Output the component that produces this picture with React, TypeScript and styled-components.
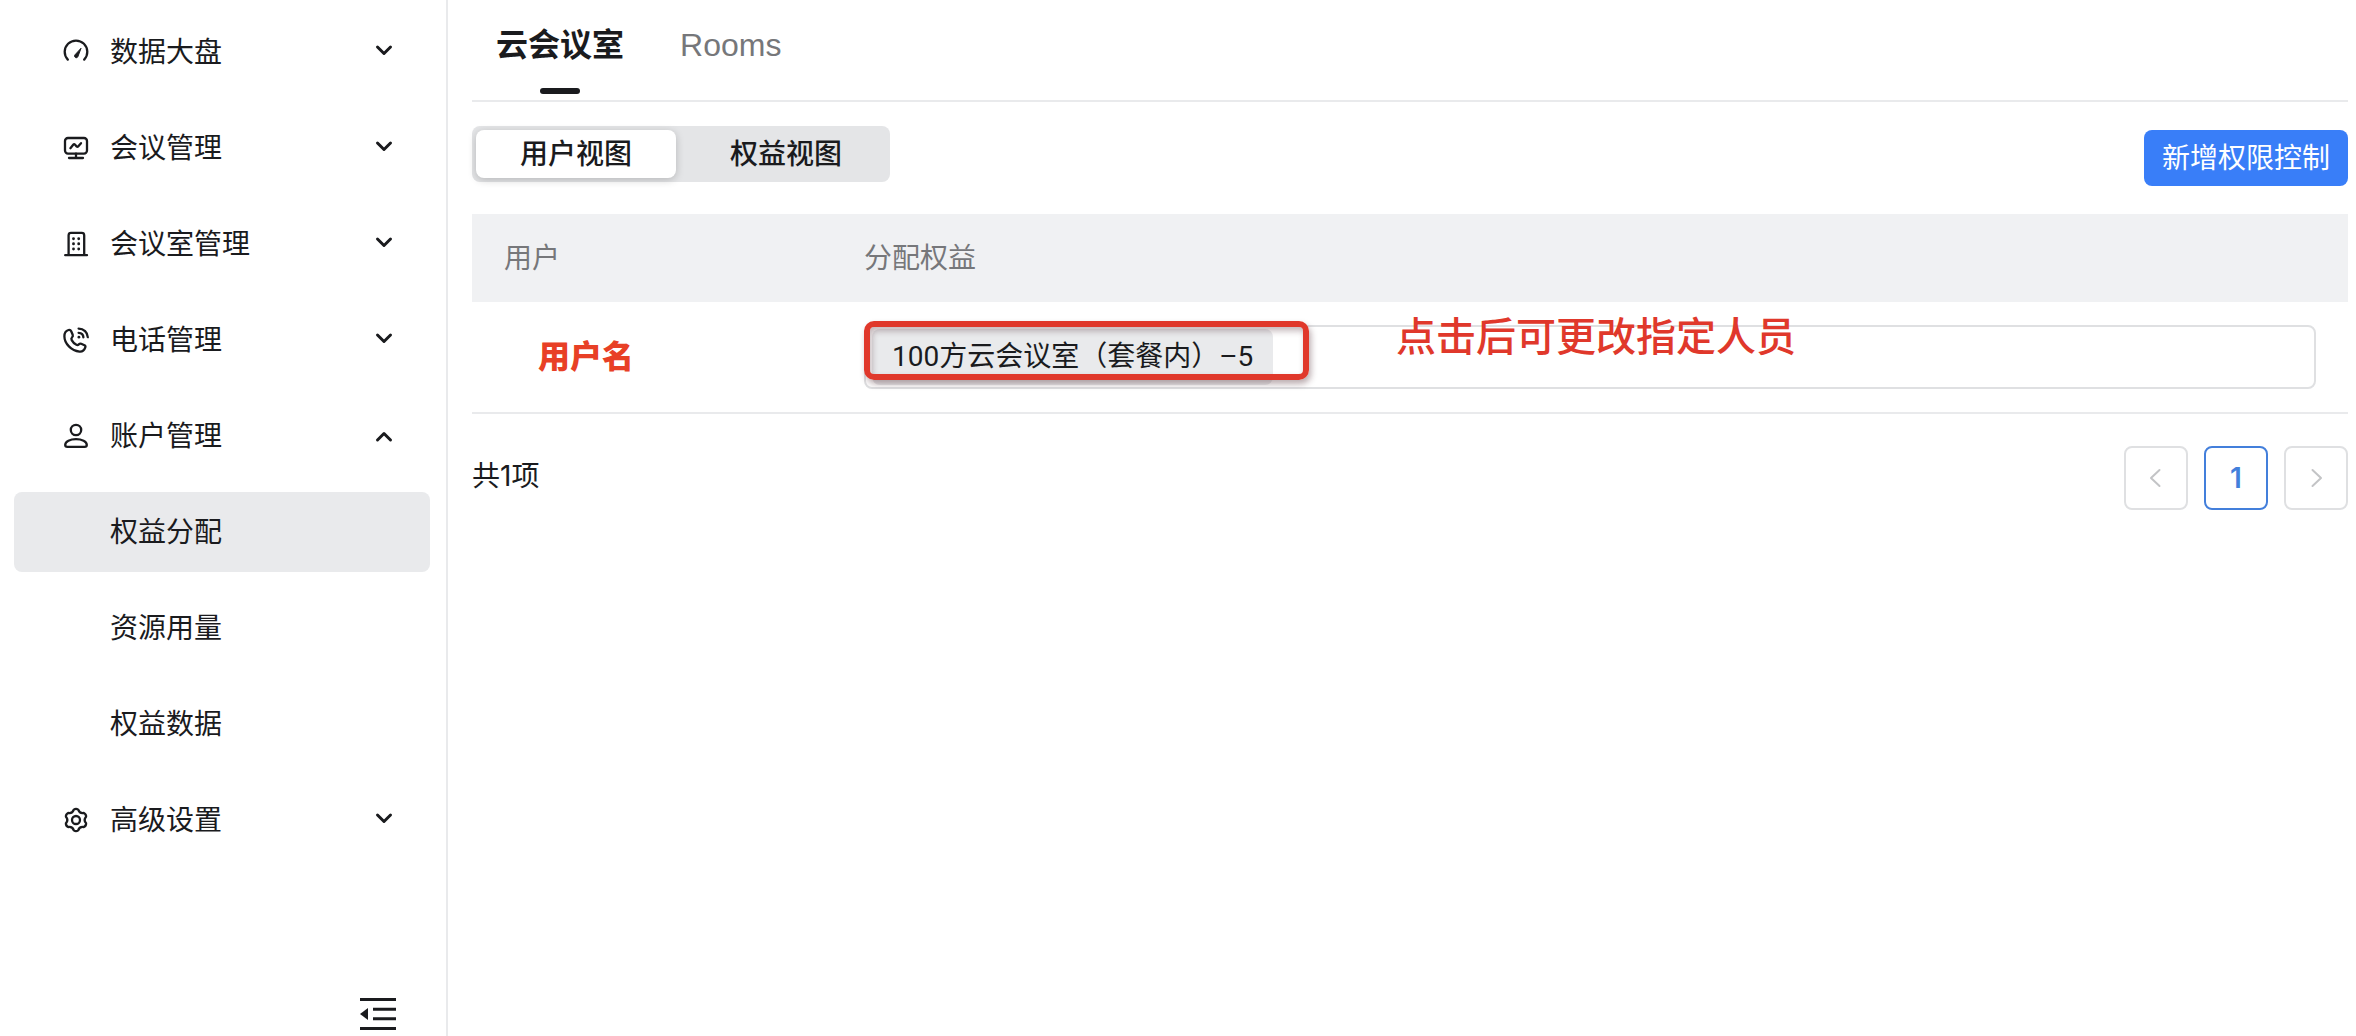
import React from 'react';
import styled, { createGlobalStyle, css } from 'styled-components';

const color = {
  text: '#1a1b1e',
  muted: '#76777a',
  line: '#e9eaec',
  field: '#dfe0e2',
  hover: '#e9eaec',
  head: '#f0f1f3',
  segment: '#e4e5e7',
  primary: '#397ef8',
  page: '#437fdb',
  mark: '#e0382b',
  disabled: '#c3c4c6',
};

const cjk = "'Noto Sans CJK SC', sans-serif";

const GlobalStyle = createGlobalStyle`
  *, *::before, *::after { box-sizing: border-box; }
  body {
    margin: 0;
    background: #fff;
    color: ${color.text};
    font-family: Inter, ${cjk};
    font-size: 28px;
    line-height: 40px;
  }
  button {
    margin: 0;
    padding: 0;
    border: 0;
    background: none;
    color: inherit;
    font: inherit;
    cursor: pointer;
  }
  a { color: inherit; text-decoration: none; }
  svg { display: block; flex: none; }
`;

const Layout = styled.div`
  display: flex;
  min-height: 100vh;
`;

const Sidebar = styled.nav`
  display: flex;
  flex-direction: column;
  flex: none;
  width: 448px;
  padding: 12px 16px 6px 14px;
  border-right: 2px solid ${color.line};
`;

const Menu = styled.ul`
  display: flex;
  flex-direction: column;
  gap: 16px;
  margin: 0;
  padding: 0;
  list-style: none;
`;

const menuRow = css`
  display: flex;
  align-items: center;
  width: 100%;
  height: 80px;
  border-radius: 8px;
`;

const MenuGroup = styled.button`
  ${menuRow}
  gap: 20px;
  padding: 0 36px 0 48px;
  text-align: left;
`;

const MenuLabel = styled.span`
  flex: 1;
`;

const MenuLink = styled.a<{ $active?: boolean }>`
  ${menuRow}
  padding: 0 36px 0 96px;
  background: ${(p) => (p.$active ? color.hover : 'transparent')};
`;

const CollapseButton = styled.button`
  align-self: flex-end;
  margin: auto 34px 0 0;
`;

const Main = styled.main`
  flex: 1;
  min-width: 0;
  padding: 0 8px 24px 24px;
`;

const Tabs = styled.div`
  display: flex;
  gap: 56px;
  padding: 0 24px;
  border-bottom: 2px solid ${color.line};
`;

const Tab = styled.button<{ $active?: boolean }>`
  position: relative;
  height: 100px;
  padding-bottom: 10px;
  font-family: 'Liberation Sans', ${cjk};
  font-size: 32px;
  font-weight: ${(p) => (p.$active ? 700 : 400)};
  color: ${(p) => (p.$active ? color.text : color.muted)};

  &::after {
    content: '';
    display: ${(p) => (p.$active ? 'block' : 'none')};
    position: absolute;
    left: 50%;
    bottom: 6px;
    width: 40px;
    height: 6px;
    margin-left: -20px;
    border-radius: 3px;
    background: ${color.text};
  }
`;

const Toolbar = styled.div`
  display: flex;
  align-items: flex-end;
  justify-content: space-between;
  padding: 24px 0 28px;
`;

const Segmented = styled.div`
  display: flex;
  align-self: flex-start;
  gap: 10px;
  padding: 4px;
  border-radius: 8px;
  background: ${color.segment};
`;

const Segment = styled.button<{ $active?: boolean }>`
  width: 200px;
  height: 48px;
  border-radius: 8px;
  font-weight: 500;
  background: ${(p) => (p.$active ? '#fff' : 'transparent')};
  box-shadow: ${(p) => (p.$active ? '0 2px 8px rgba(0, 0, 0, 0.2)' : 'none')};
`;

const PrimaryButton = styled.button`
  height: 56px;
  margin-top: 4px;
  padding: 0 18px;
  border-radius: 8px;
  background: ${color.primary};
  color: #fff;
`;

const Table = styled.table`
  width: 100%;
  border-collapse: separate;
  border-spacing: 0;
  table-layout: fixed;
`;

const HeadCell = styled.th<{ $width?: number }>`
  width: ${(p) => (p.$width ? `${p.$width}px` : 'auto')};
  height: 88px;
  padding: 0 32px;
  background: ${color.head};
  color: ${color.muted};
  font-weight: 400;
  text-align: left;
`;

const Cell = styled.td`
  height: 112px;
  padding: 0 32px;
  border-bottom: 2px solid ${color.line};
`;

const UserName = styled.strong`
  display: block;
  padding-left: 34px;
  color: #e84026;
  font-size: 32px;
  font-weight: 900;
`;

const FieldWrap = styled.div`
  position: relative;
`;

const BenefitField = styled.button`
  display: flex;
  align-items: center;
  width: 100%;
  height: 64px;
  padding: 2px 6px;
  border: 2px solid ${color.field};
  border-radius: 8px;
  text-align: left;
`;

const Tag = styled.span`
  height: 56px;
  padding: 0 20px;
  border-radius: 8px;
  background: ${color.hover};
  font-family: Roboto, ${cjk};
  line-height: 56px;
  white-space: nowrap;
`;

const Highlight = styled.span`
  position: absolute;
  top: -4px;
  left: 0;
  width: 445px;
  height: 59px;
  border: 6px solid ${color.mark};
  border-radius: 10px;
  box-shadow: 2px 4px 6px rgba(60, 20, 30, 0.35), inset 2px 4px 6px rgba(60, 20, 30, 0.3);
  pointer-events: none;
`;

const Note = styled.span`
  position: absolute;
  top: -8px;
  left: 532px;
  color: ${color.mark};
  font-size: 40px;
  font-weight: 500;
  white-space: nowrap;
  pointer-events: none;
`;

const Footer = styled.div`
  display: flex;
  align-items: flex-start;
  justify-content: space-between;
  padding-top: 32px;
`;

const Total = styled.span`
  line-height: 60px;
`;

const Pager = styled.div`
  display: flex;
  gap: 16px;
`;

const PageButton = styled.button<{ $active?: boolean }>`
  display: flex;
  align-items: center;
  justify-content: center;
  width: 64px;
  height: 64px;
  border: 2px solid ${(p) => (p.$active ? color.page : color.field)};
  border-radius: 8px;
  color: ${(p) => (p.$active ? color.page : color.disabled)};
  font-weight: 600;
`;

const Icon = ({ children }: { children: React.ReactNode }) => (
  <svg
    width="28"
    height="28"
    viewBox="0 0 28 28"
    fill="none"
    stroke="currentColor"
    strokeWidth="2.3"
    strokeLinecap="round"
    strokeLinejoin="round"
    aria-hidden="true"
  >
    {children}
  </svg>
);

const GaugeIcon = () => (
  <Icon>
    <path d="M5.8 21.6A11.3 11.3 0 1 1 22.2 21.6" />
    <path d="M18.9 10.6 15.8 18.8A1.6 1.6 0 0 1 12.7 17.3Z" fill="currentColor" strokeWidth="1" />
  </Icon>
);

const MonitorIcon = () => (
  <Icon>
    <rect x="3" y="4" width="22" height="15.6" rx="3" />
    <path d="M14 19.6V24M7 24H21M8.4 14.2 11.4 10.6C11.9 10 12.4 10 12.9 10.5L14.6 12.5C15.1 13 15.7 13 16.1 12.5L19 9.2" />
  </Icon>
);

const BuildingIcon = () => (
  <Icon>
    <path d="M6.6 25V5.2A2.4 2.4 0 0 1 9 2.9H19.8A2.4 2.4 0 0 1 22.2 5.2V25M3.2 25.2H25" />
    <path d="M11.5 8.6V8.8M16.7 8.6V8.8M11.5 13.7V13.9M16.7 13.7V13.9M11.5 18.9V19.1M16.7 18.9V19.1" strokeWidth="2.8" />
  </Icon>
);

const PhoneIcon = () => (
  <Icon>
    <path d="M9.2 5.2 10.7 8.8C11.1 9.9 10.9 10.5 10.1 11.3C9.2 12.2 9.1 13 9.7 14.1C10.9 16.3 12.4 17.8 14.4 18.8C15.4 19.3 16.1 19.1 16.8 18.4C17.6 17.6 18.3 17.4 19.2 17.8L22.5 19.3C23.4 19.7 23.6 20.5 23.3 21.4C22.4 24 20.4 25.9 17.5 25.6C9.4 24.8 2.4 17.6 2.4 10.2C2.4 7.2 4.1 4.7 6.5 4C7.8 3.7 8.7 4.1 9.2 5.2Z" />
    <path d="M16.6 2.6C21.8 2.6 25.6 6.4 25.8 11.2M16.6 6.9C19.4 7 21.3 8.8 21.4 11.4" />
    <path d="M16.9 11.1V11.2" strokeWidth="2.8" />
  </Icon>
);

const UserIcon = () => (
  <Icon>
    <circle cx="14" cy="8" r="5.2" />
    <path d="M14 17.2C19.8 17.2 24.8 19.4 24.8 22.9C24.8 24.1 24 24.8 22.6 24.8H5.4C4 24.8 3.2 24.1 3.2 22.9C3.2 19.4 8.2 17.2 14 17.2Z" />
  </Icon>
);

const gearOutline = (() => {
  const at = (deg: number, r: number) => {
    const a = (deg * Math.PI) / 180;
    return `${(14 + r * Math.cos(a)).toFixed(2)} ${(14 + r * Math.sin(a)).toFixed(2)}`;
  };
  let d = `M${at(-102, 10.6)}`;
  for (let i = 0; i < 6; i += 1) {
    const a = -90 + i * 60;
    d += `Q${at(a, 11.8)} ${at(a + 12, 10.6)}Q${at(a + 30, 7.2)} ${at(a + 48, 10.6)}`;
  }
  return `${d}Z`;
})();

const GearIcon = () => (
  <Icon>
    <path d={gearOutline} />
    <circle cx="14" cy="14" r="4" />
  </Icon>
);

const Chevron = ({ up }: { up?: boolean }) => (
  <svg width="20" height="24" viewBox="0 0 20 24" fill="none" stroke="currentColor" strokeWidth="3" strokeLinecap="round" strokeLinejoin="round" aria-hidden="true">
    <path d={up ? 'M3.5 16 10 9.5 16.5 16' : 'M3.5 7 10 13.5 16.5 7'} />
  </svg>
);

const CollapseIcon = () => (
  <svg width="36" height="32" viewBox="0 0 36 32" fill="none" stroke="currentColor" strokeWidth="3" aria-hidden="true">
    <path d="M0 1.5H36M13 11.2H36M13 20.8H36M0 30.5H36" />
    <path d="M0 16 8 10V22Z" fill="currentColor" stroke="none" />
  </svg>
);

const PageArrow = ({ next }: { next?: boolean }) => (
  <svg width="20" height="20" viewBox="0 0 20 20" fill="none" stroke="currentColor" strokeWidth="2" strokeLinecap="round" strokeLinejoin="round" aria-hidden="true">
    <path d={next ? 'M6.5 2 15 10 6.5 18' : 'M13.5 2 5 10 13.5 18'} />
  </svg>
);

type Group = { label: string; icon: React.ReactNode; open?: boolean; items?: string[] };

const groups: Group[] = [
  { label: '数据大盘', icon: <GaugeIcon /> },
  { label: '会议管理', icon: <MonitorIcon /> },
  { label: '会议室管理', icon: <BuildingIcon /> },
  { label: '电话管理', icon: <PhoneIcon /> },
  { label: '账户管理', icon: <UserIcon />, open: true, items: ['权益分配', '资源用量', '权益数据'] },
  { label: '高级设置', icon: <GearIcon /> },
];

export default function App() {
  return (
    <Layout lang="zh-CN">
      <GlobalStyle />
      <Sidebar>
        <Menu>
          {groups.map((group) => (
            <React.Fragment key={group.label}>
              <li>
                <MenuGroup type="button" aria-expanded={!!group.open}>
                  {group.icon}
                  <MenuLabel>{group.label}</MenuLabel>
                  <Chevron up={group.open} />
                </MenuGroup>
              </li>
              {group.items?.map((item, i) => (
                <li key={item}>
                  <MenuLink href="#" $active={i === 0} aria-current={i === 0 ? 'page' : undefined}>
                    {item}
                  </MenuLink>
                </li>
              ))}
            </React.Fragment>
          ))}
        </Menu>
        <CollapseButton type="button" aria-label="收起菜单">
          <CollapseIcon />
        </CollapseButton>
      </Sidebar>

      <Main>
        <Tabs role="tablist">
          <Tab type="button" role="tab" aria-selected $active>
            云会议室
          </Tab>
          <Tab type="button" role="tab" aria-selected={false}>
            Rooms
          </Tab>
        </Tabs>

        <Toolbar>
          <Segmented>
            <Segment type="button" aria-pressed $active>
              用户视图
            </Segment>
            <Segment type="button" aria-pressed={false}>
              权益视图
            </Segment>
          </Segmented>
          <PrimaryButton type="button">新增权限控制</PrimaryButton>
        </Toolbar>

        <Table>
          <thead>
            <tr>
              <HeadCell scope="col" $width={360}>
                用户
              </HeadCell>
              <HeadCell scope="col">分配权益</HeadCell>
            </tr>
          </thead>
          <tbody>
            <tr>
              <Cell>
                <UserName>用户名</UserName>
              </Cell>
              <Cell>
                <FieldWrap>
                  <BenefitField type="button" aria-haspopup="dialog">
                    <Tag>100方云会议室（套餐内）–5</Tag>
                  </BenefitField>
                  <Highlight />
                  <Note>点击后可更改指定人员</Note>
                </FieldWrap>
              </Cell>
            </tr>
          </tbody>
        </Table>

        <Footer>
          <Total>共1项</Total>
          <Pager>
            <PageButton type="button" aria-label="上一页">
              <PageArrow />
            </PageButton>
            <PageButton type="button" aria-current="page" $active>
              1
            </PageButton>
            <PageButton type="button" aria-label="下一页">
              <PageArrow next />
            </PageButton>
          </Pager>
        </Footer>
      </Main>
    </Layout>
  );
}
